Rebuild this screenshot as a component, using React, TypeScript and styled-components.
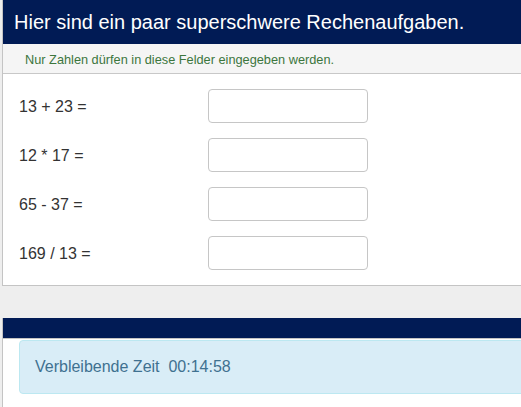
import React from "react";
import styled, { createGlobalStyle } from "styled-components";

const GlobalStyle = createGlobalStyle`
  html, body {
    margin: 0;
    padding: 0;
    background: #eeeeee;
    overflow: hidden;
    font-family: "Liberation Sans", Arial, sans-serif;
  }
`;

const Page = styled.div`
  width: 580px;
  padding-left: 2px;
`;

const Panel = styled.section<{ $top?: number }>`
  margin-top: ${(p) => p.$top ?? 0}px;
  background: #ffffff;
  border: 1px solid #c4c4c4;
  border-top: none;
`;

const Heading = styled.h1<{ $h: number }>`
  margin: 0;
  height: ${(p) => p.$h}px;
  line-height: ${(p) => p.$h}px;
  padding: 0 11px;
  background: #011b55;
  color: #ffffff;
  font-size: 20px;
  font-weight: normal;
  border-bottom: ${(p) => (p.$h < 30 ? "1px solid #c4c4c4" : "none")};
`;

const Hint = styled.div`
  height: 20px;
  padding: 9px 22px 0;
  background: #f5f5f5;
  border-bottom: 1px solid #c8c8c8;
  color: #3c763d;
  font-size: 12.75px;
  line-height: 14px;
`;

const Body = styled.div`
  display: flex;
  flex-direction: column;
  gap: 15px;
  padding: 15px 16px;
`;

const Row = styled.div`
  display: grid;
  grid-template-columns: 189px 160px;
  align-items: center;
  height: 34px;
`;

const Label = styled.label`
  color: #333333;
  font-size: 16px;
  line-height: 36px;
  height: 34px;
`;

const Field = styled.input`
  box-sizing: border-box;
  width: 160px;
  height: 34px;
  border: 1px solid #c6c6c6;
  border-radius: 4px;
  background: #ffffff;
  padding: 6px 12px;
  font-size: 14px;
  font-family: inherit;
`;

const TimerBody = styled.div`
  padding: 1px 0 14px 16px;
`;

const Alert = styled.div`
  border: 1px solid #bce8f1;
  border-radius: 4px;
  background: #d9edf7;
  color: #3f7190;
  font-size: 16px;
  line-height: 22px;
  padding: 15px;
  white-space: pre;
`;

const tasks = ["13 + 23 =", "12 * 17 =", "65 - 37 =", "169 / 13 ="];

export default function App() {
  return (
    <>
      <GlobalStyle />
      <Page>
        <Panel>
          <Heading $h={44}>Hier sind ein paar superschwere Rechenaufgaben.</Heading>
          <Hint>Nur Zahlen dürfen in diese Felder eingegeben werden.</Hint>
          <Body>
            {tasks.map((t) => (
              <Row key={t}>
                <Label>{t}</Label>
                <Field type="text" />
              </Row>
            ))}
          </Body>
        </Panel>
        <Panel $top={32}>
          <Heading $h={20}></Heading>
          <TimerBody>
            <Alert>{"Verbleibende Zeit  00:14:58"}</Alert>
          </TimerBody>
        </Panel>
      </Page>
    </>
  );
}
